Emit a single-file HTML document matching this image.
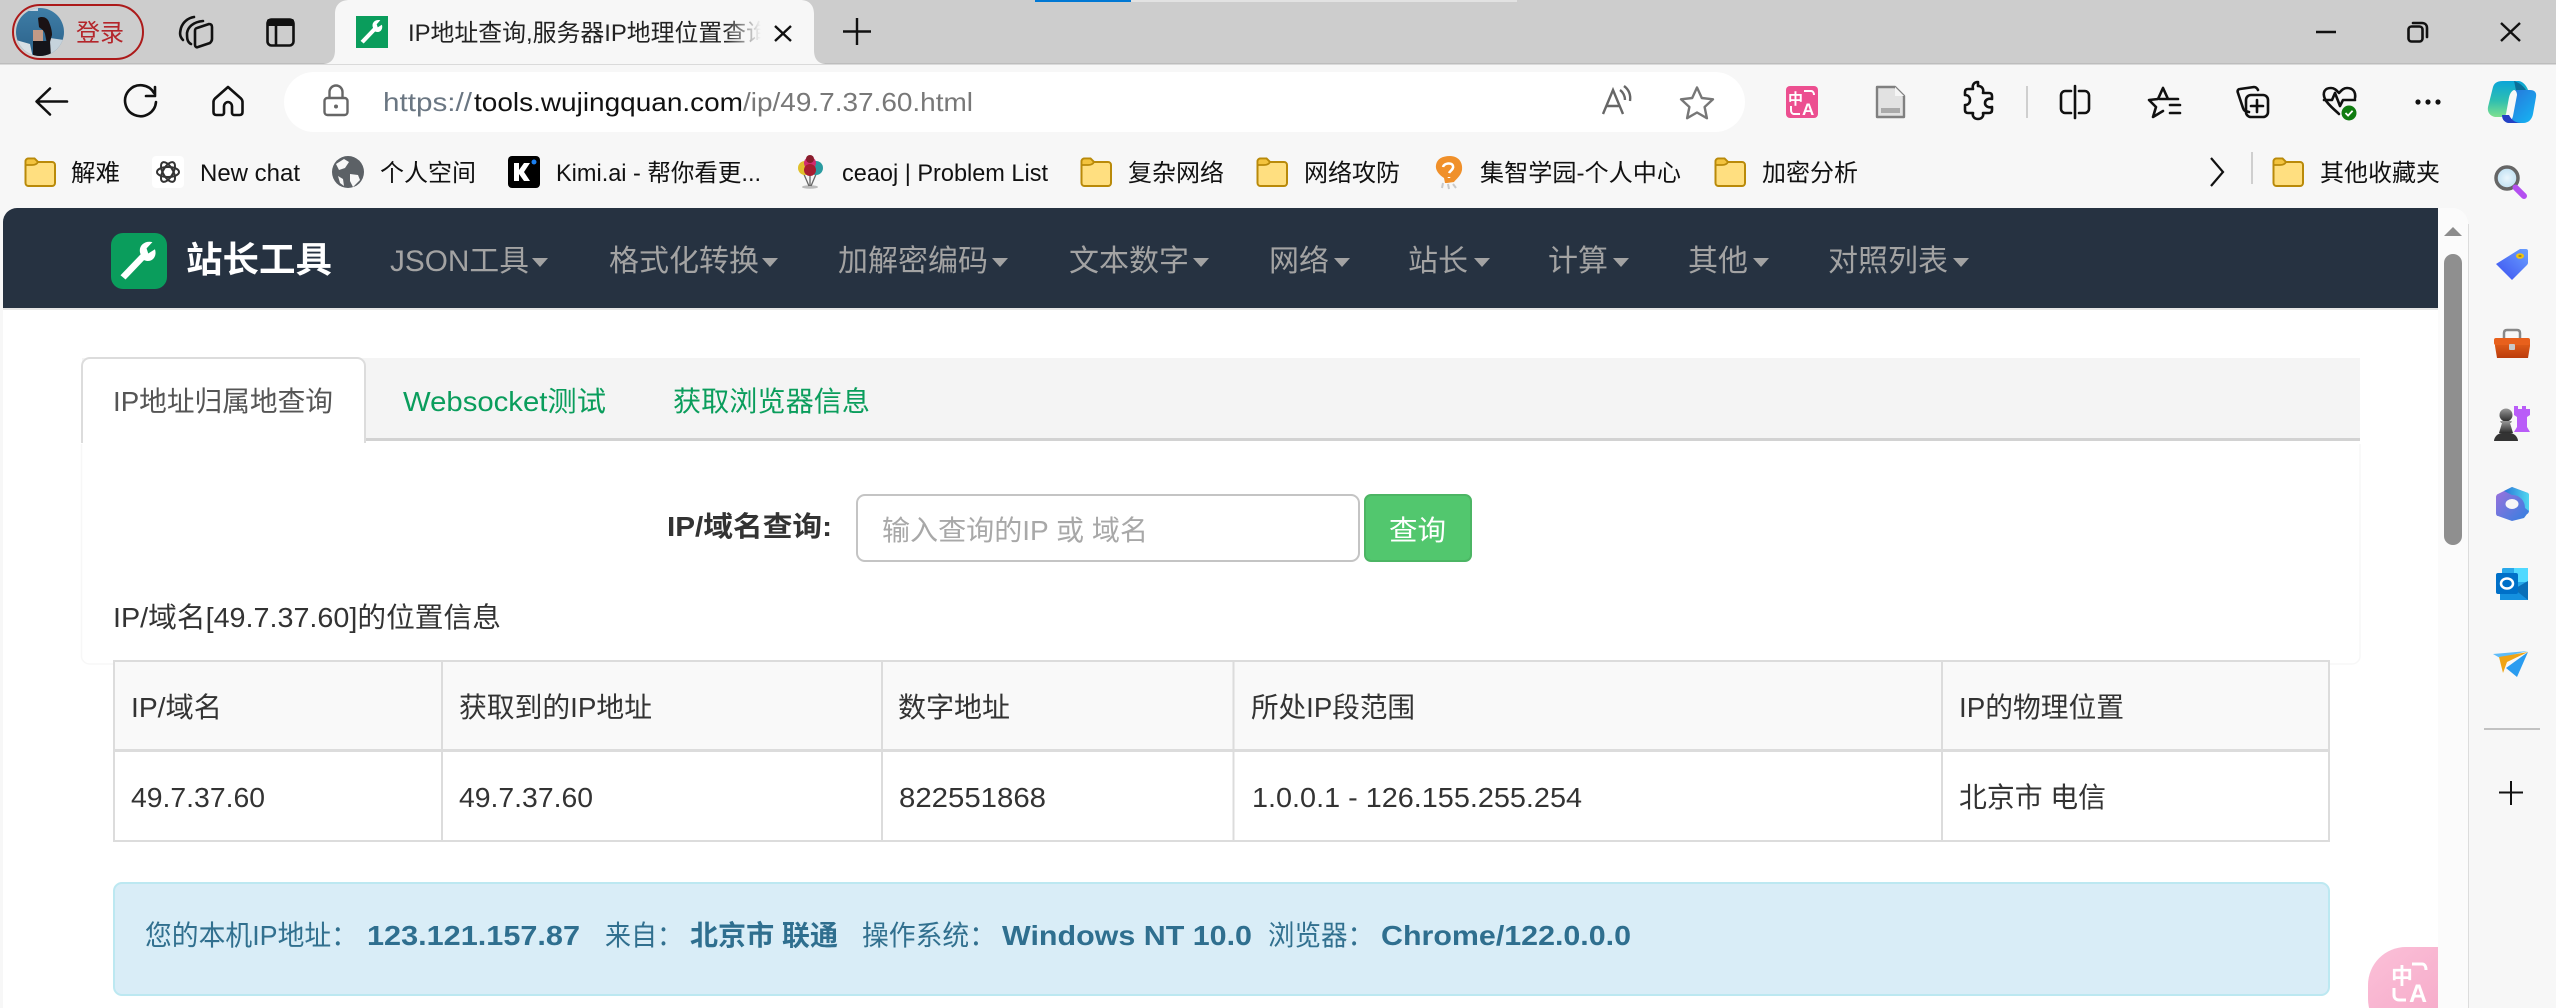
<!DOCTYPE html>
<html lang="zh"><head><meta charset="utf-8"><title>IP地址查询</title>
<style>
html,body{margin:0;padding:0;width:2556px;height:1008px;overflow:hidden;background:#f7f7f7}
svg{display:block}
text{font-family:"Liberation Sans","Noto Sans CJK SC",sans-serif}
.bm{font-size:24px;fill:#111}
.nav{font-size:30px;fill:#a3a3a3}
.b{font-size:28px;fill:#333}
.al{font-size:28px;fill:#31708f}
.alb{font-size:28px;fill:#2f6f8f;font-weight:700}
.ic{fill:none;stroke:#111;stroke-width:2.6;stroke-linecap:round;stroke-linejoin:round}
</style></head><body>
<svg xmlns="http://www.w3.org/2000/svg" width="2556" height="1008" viewBox="0 0 2556 1008">
<defs>
<symbol id="fold" viewBox="0 0 32 30"><path d="M1.5 6V26a3 3 0 0 0 3 3H28a3 3 0 0 0 3-3V8a3 3 0 0 0-3-3H14L10.500 1.500H4.500a3 3 0 0 0-3 3Z" fill="#ffdf80" stroke="#b98a0a" stroke-width="2"/><path d="M1.500 8H8C11 8 13 7 14 5L10.500 1.500H4.500a3 3 0 0 0-3 3Z" fill="#f3c33e" stroke="#b98a0a" stroke-width="1.800"/></symbol>
<symbol id="wr" viewBox="0 0 100 100"><path d="M18 94 L6 84 L54 34 C46 16 62 0 82 5 L68 20 L72 32 L88 22 C94 40 80 56 62 48 Z" fill="#fff"/></symbol>
<linearGradient id="pk" x1="0" y1="0" x2="1" y2="1"><stop offset="0" stop-color="#fbc0d8"/><stop offset="1" stop-color="#f4a3c4"/></linearGradient>
<linearGradient id="fadeT" x1="0" x2="1"><stop offset="0" stop-color="#f7f7f7" stop-opacity="0"/><stop offset="1" stop-color="#f7f7f7"/></linearGradient>
<linearGradient id="cp1" x1="0" y1="0" x2="0" y2="1"><stop offset="0" stop-color="#0aa5d8"/><stop offset=".55" stop-color="#2fbfb0"/><stop offset="1" stop-color="#7fe08f"/></linearGradient>
<linearGradient id="cp2" x1="0" y1="0" x2="1" y2="1"><stop offset="0" stop-color="#2a6fd8"/><stop offset="1" stop-color="#14b8f4"/></linearGradient>
<linearGradient id="tagg" x1="0" y1="1" x2="1" y2="0"><stop offset="0" stop-color="#3b4ff0"/><stop offset="1" stop-color="#6aa0ff"/></linearGradient>
<linearGradient id="boxg" x1="0" y1="0" x2="0" y2="1"><stop offset="0" stop-color="#e8641c"/><stop offset="1" stop-color="#bb3c0c"/></linearGradient>
<linearGradient id="pawn" x1="0" y1="0" x2="0" y2="1"><stop offset="0" stop-color="#999"/><stop offset="1" stop-color="#2c2c2c"/></linearGradient>
<linearGradient id="m1" x1="0" y1="0" x2="1" y2="1"><stop offset="0" stop-color="#a070dc"/><stop offset="1" stop-color="#3080e0"/></linearGradient>
<linearGradient id="m2" x1="0" y1="0" x2="1" y2="0"><stop offset="0" stop-color="#2a78d8"/><stop offset="1" stop-color="#50d8f0"/></linearGradient>
<linearGradient id="sk" x1="0" y1="0" x2="0" y2="1"><stop offset="0" stop-color="#3f7fa8"/><stop offset="1" stop-color="#2b6088"/></linearGradient>
<radialGradient id="lens"><stop offset="0" stop-color="#eaf6fd"/><stop offset="1" stop-color="#bfe0f2"/></radialGradient>
<clipPath id="cav"><circle cx="40" cy="32" r="24"/></clipPath>
<clipPath id="ctitle"><rect x="405" y="10" width="356" height="44"/></clipPath>
<clipPath id="cpage"><path d="M3 222a14 14 0 0 1 14-14H2452a16 16 0 0 1 16 16V1008H3Z"/></clipPath>
<clipPath id="cfloat"><rect x="2300" y="930" width="138" height="78"/></clipPath>
</defs>

<!-- window background -->
<rect width="2556" height="1008" fill="#f7f7f7"/>
<rect width="2556" height="63" fill="#cdcdcd"/>
<rect y="63" width="2556" height="1.500" fill="#bdbdbd"/>
<rect x="1035" y="0" width="96" height="2" fill="#0078d4"/><rect x="1131" y="0" width="386" height="2" fill="#e2e2e2"/>

<!-- profile -->
<rect x="13" y="5" width="130" height="54" rx="27" fill="none" stroke="#ac1a1a" stroke-width="2"/>
<g clip-path="url(#cav)"><rect x="14" y="6" width="52" height="52" fill="url(#sk)"/><rect x="26" y="8" width="12" height="3" fill="#c9d6e2"/><path d="M16 40l14 4 3 14H14Z" fill="#d8dfe4"/><path d="M50 38l14 2v18H50Z" fill="#c6d3dc"/><path d="M33 30h10v12H33Z" fill="#c29a86"/><path d="M38 18c4-2 9-1 11 4 2 5 3 9 3 13l-2 7-3 2-2-10c-1-4-4-5-6-7Z" fill="#1a1214"/><path d="M33 41h17l1 15H33Z" fill="#14141a"/></g>
<text x="76" y="41" font-size="24" fill="#b4252a" textLength="48" lengthAdjust="spacingAndGlyphs">登录</text>
<!-- collections / vertical tabs -->
<g class="ic" stroke-width="2.400"><path d="M183 40C179 36 180 32 181 28C183 22 188 18 194 17"/><path d="M191 44C187 42 187 38 187 33C188 27 193 22 203 21"/><path d="M195 31c0-2 1-3 2-3l12-4c2 0 3 1 3 3v12c0 2-1 3-2 4l-12 4c-2 1-3-1-3-2Z"/></g>
<rect x="267.500" y="19.500" width="26" height="26" rx="4" class="ic"/><rect x="267" y="19" width="27" height="7" rx="2" fill="#111"/><path d="M276 25V45" class="ic"/>

<!-- active tab -->
<path d="M322 64c9 0 13-5 13-14V14C335 5 340 0 350 0H800c9 0 14 5 14 14V50c0 9 4 14 13 14Z" fill="#f7f7f7"/>
<rect x="356" y="16" width="32" height="32" fill="#0a9d5c"/><use href="#wr" x="359" y="19" width="26" height="26"/>
<g clip-path="url(#ctitle)"><text x="408" y="41" font-size="24" fill="#222" textLength="362" lengthAdjust="spacingAndGlyphs">IP地址查询,服务器IP地理位置查询</text></g>
<rect x="725" y="14" width="36" height="38" fill="url(#fadeT)"/>
<path d="M775 26L791 41M791 26L775 41" stroke="#111" stroke-width="2.400" fill="none"/>
<path d="M857 18V45M843 31.500H871" stroke="#111" stroke-width="2.400" fill="none"/>

<!-- window controls -->
<path d="M2316 32H2336" stroke="#111" stroke-width="2.600"/>
<rect x="2408.500" y="26.500" width="14" height="15" rx="3" class="ic"/><path d="M2413 23h9c3 0 5 2 5 5v9" class="ic"/>
<path d="M2501 23L2520 41M2520 23L2501 41" stroke="#111" stroke-width="2.400"/>

<!-- toolbar icons -->
<path d="M67 101.500H37M50 88.500L36.500 101.500L50 114.500" class="ic"/>
<path d="M154 93a15.500 15.500 0 1 0 2 9" class="ic"/><path d="M155 87v9h-9" class="ic"/>
<path d="M228 87L215 98.500c-1 1-1.500 2-1.500 3.500V112c0 2 1 3 3 3H222c1 0 2-1 2-2V106c0-2 2-4 4-4s4 2 4 4v7c0 1 1 2 2 2h5.500c2 0 3-1 3-3V102c0-1.500-.5-2.500-1.500-3.500Z" class="ic"/>

<!-- address bar -->
<rect x="284" y="72" width="1461" height="60" rx="30" fill="#fff"/>
<rect x="324.500" y="98" width="23" height="17" rx="3" fill="none" stroke="#666" stroke-width="2.400"/><path d="M329.500 98V92a6.500 6.500 0 0 1 13 0v6" fill="none" stroke="#666" stroke-width="2.400"/><circle cx="336" cy="106.500" r="2" fill="#666"/>
<text x="383" y="111" font-size="26" fill="#6a7682" textLength="89" lengthAdjust="spacingAndGlyphs">https://</text>
<text x="474" y="111" font-size="26" fill="#111" textLength="269" lengthAdjust="spacingAndGlyphs">tools.wujingquan.com</text>
<text x="743" y="111" font-size="26" fill="#787878" textLength="230" lengthAdjust="spacingAndGlyphs">/ip/49.7.37.60.html</text>
<path d="M1603 114L1613 90L1623 114M1606.500 106H1620" fill="none" stroke="#666" stroke-width="2.400"/><path d="M1620 90c3 2 5 6 5 10M1624 86c4 3 7 8 6 15" fill="none" stroke="#666" stroke-width="2.400"/>
<path d="M1697 87.500l4.800 10.500 11.200 1.300-8.400 7.700 2.300 11.200-9.900-5.700-9.900 5.700 2.300-11.200-8.400-7.700 11.200-1.300Z" fill="none" stroke="#777" stroke-width="2.400" stroke-linejoin="round"/>

<!-- right toolbar -->
<rect x="1786" y="86" width="32" height="32" rx="4" fill="#ec4f90"/>
<text x="1788" y="104" font-size="15" font-weight="700" fill="#fff">中</text>
<text x="1802" y="115" font-size="17" font-weight="700" fill="#fff">A</text>
<path d="M1804 91h7c2 0 3 2 3 4M1791 106v4c0 2 1 4 3 4h6" fill="none" stroke="#fff" stroke-width="2"/>
<path d="M1877 87H1895L1904 96V117H1877Z" fill="#e2e2e2" stroke="#808080" stroke-width="2.400" stroke-linejoin="round"/><path d="M1895 87V96H1904" fill="#f5f5f5" stroke="none"/><rect x="1881" y="108" width="19" height="5" fill="#aaa"/>
<path d="M1978 87c4 0 6 3 5 7h6c2 0 3 1 3 3v3c-4-1-7 1-7 4s3 5 7 4v3c0 2-1 3-3 3h-6c1 4-2 6-5 6s-6-2-5-6h-5c-2 0-3-1-3-3v-5c3 0 5-2 5-5s-2-5-5-5v-3c0-2 1-3 3-3h5c-1-4 1-7 5-7Z" class="ic" transform="translate(0,-1)"/>
<rect x="2026" y="86" width="2" height="32" fill="#cfcfcf"/>
<path d="M2071 91H2065c-2 0-4 2-4 4V109c0 2 2 4 4 4H2071M2079 91H2085c2 0 4 2 4 4V109c0 2-2 4-4 4H2079" class="ic"/><path d="M2075 86V118" class="ic"/>
<path d="M2163 88L2168 99H2160M2168 99H2178M2163 88L2158 99L2149 100L2156 107L2153 117L2163 111" class="ic"/><path d="M2170 105H2180M2170 113H2180" class="ic" />
<path d="M2249 112c-4-1-5-1-6-4l-5-15c-1-2 0-4 2-4l14-2c2 0 3 1 4 3" class="ic"/><rect x="2246" y="95" width="22" height="22" rx="5" class="ic"/><path d="M2257 100V112M2251 106H2263" class="ic"/>
<path d="M2339 114c-5-5-11-9-14-15-3-7 0-11 6-11 4 0 6 3 8 5 2-2 4-5 8-5 6 0 9 4 8 10" class="ic"/><path d="M2324 100h8l3-7 5 13 3-6h12" class="ic" stroke-width="2"/>
<circle cx="2349" cy="113" r="7.500" fill="#107c10"/><path d="M2345.500 113l2.600 2.600 4.500-4.800" fill="none" stroke="#fff" stroke-width="1.800"/>
<circle cx="2418" cy="102" r="2.600" fill="#111"/><circle cx="2428" cy="102" r="2.600" fill="#111"/><circle cx="2438" cy="102" r="2.600" fill="#111"/>
<path d="M2504 81H2519c5 1 8 6 9 9l-14 0c-5 2-5 9-6 13l-2 11c-1 2-3 3-6 3h-5c-5-1-8-5-7-10l5-20c1-3 3-6 10-6Z" fill="url(#cp1)"/>
<path d="M2514 90H2530c4 0 7 2 6 7l-3 17c-1 5-4 9-10 9H2505c5 0 7-3 8-7l4-21c0-2-1-5-3-5Z" fill="url(#cp2)"/>
<path d="M2502 115c0 5 3 8 8 8h12c-6 0-10-2-13-8Z" fill="#2440c4"/><path d="M2514 81c3 1 8 3 12 9H2516c-1-3-1-6-2-9Z" fill="#0b6e98"/>

<!-- bookmarks -->
<use href="#fold" x="24" y="157" width="32" height="30"/>
<text x="71" y="181" class="bm" textLength="49" lengthAdjust="spacingAndGlyphs">解难</text>
<rect x="152" y="156" width="32" height="32" rx="4" fill="#fff"/>
<g fill="none" stroke="#333" stroke-width="2"><ellipse cx="168" cy="172" rx="11" ry="5" transform="rotate(60 168 172)"/><ellipse cx="168" cy="172" rx="11" ry="5" transform="rotate(-60 168 172)"/><ellipse cx="168" cy="172" rx="11" ry="5"/></g>
<text x="200" y="181" class="bm" textLength="100" lengthAdjust="spacingAndGlyphs">New chat</text>
<circle cx="348" cy="172" r="16" fill="#5c6166"/><path d="M336 164l8-5 5 3-4 6-6 2ZM350 174l8 1 2 5-7 7-3-6ZM338 176l5 3 1 7-4-3Z" fill="#f7f7f7"/>
<text x="380" y="181" class="bm" textLength="96" lengthAdjust="spacingAndGlyphs">个人空间</text>
<rect x="508" y="156" width="32" height="32" rx="4" fill="#000"/><path d="M514 163h5v7l5-7h6l-6 9 6 9h-6l-5-7v7h-5Z" fill="#fff"/><circle cx="534" cy="162" r="2.500" fill="#1b7ff0"/>
<text x="556" y="181" class="bm" textLength="205" lengthAdjust="spacingAndGlyphs">Kimi.ai - 帮你看更...</text>
<ellipse cx="810" cy="187" rx="8" ry="1.800" fill="#bbb"/><path d="M810 172V186M803 172L809 186M817 172L811 186" stroke="#666" stroke-width="1.300"/>
<circle cx="805" cy="168" r="7" fill="#e0c02c"/><circle cx="816" cy="168" r="7" fill="#2a9ba0"/><circle cx="810" cy="163" r="6" fill="#d02c70"/><circle cx="810" cy="159" r="4" fill="#8a1d2c"/><circle cx="810" cy="170" r="6" fill="#a81d30"/>
<text x="842" y="181" class="bm" textLength="206" lengthAdjust="spacingAndGlyphs">ceaoj | Problem List</text>
<use href="#fold" x="1080" y="157" width="32" height="30"/>
<text x="1128" y="181" class="bm" textLength="96" lengthAdjust="spacingAndGlyphs">复杂网络</text>
<use href="#fold" x="1256" y="157" width="32" height="30"/>
<text x="1304" y="181" class="bm" textLength="96" lengthAdjust="spacingAndGlyphs">网络攻防</text>
<path d="M1450 156c9 0 13 7 12 14-1 6-6 9-8 12l-7 1-2 0-1-5c-5-3-9-8-8-13 1-6 6-9 14-9Z" fill="#f0902a"/><path d="M1443 167c1-4 9-5 10-1 1 3-3 5-4 7M1449 177v1" fill="none" stroke="#fff" stroke-width="2.500"/><path d="M1443 183l-1 5M1448 184l1 5M1453 184l3 4" stroke="#c9c9c9" stroke-width="2"/>
<text x="1480" y="181" class="bm" textLength="201" lengthAdjust="spacingAndGlyphs">集智学园-个人中心</text>
<use href="#fold" x="1714" y="157" width="32" height="30"/>
<text x="1762" y="181" class="bm" textLength="96" lengthAdjust="spacingAndGlyphs">加密分析</text>
<path d="M2211 158L2223 172L2211 186" fill="none" stroke="#111" stroke-width="2.200"/>
<rect x="2251" y="152" width="2" height="32" fill="#cfcfcf"/>
<use href="#fold" x="2272" y="157" width="32" height="30"/>
<text x="2320" y="181" class="bm" textLength="120" lengthAdjust="spacingAndGlyphs">其他收藏夹</text>

<!-- page -->
<path d="M3 222a14 14 0 0 1 14-14H2452a16 16 0 0 1 16 16V1008H3Z" fill="#fff"/>
<path d="M2468 224V1008" stroke="#dcdcdc" stroke-width="2"/>
<g clip-path="url(#cpage)">
<rect x="2438" y="208" width="30" height="800" fill="#fbfbfb"/>
<rect x="3" y="208" width="2435" height="100" fill="#263241"/>
<rect x="3" y="308" width="2435" height="2" fill="#e6e6e6"/>
</g>
<path d="M2444 236L2453 227L2462 236Z" fill="#8c8c8c"/>
<rect x="2444" y="254" width="18" height="291" rx="9" fill="#8f8f8f"/>

<!-- navbar -->
<rect x="111" y="233" width="56" height="56" rx="12" fill="#0a9d5c"/><use href="#wr" x="118" y="240" width="42" height="42"/>
<text x="186" y="272" font-size="36" font-weight="700" fill="#fff" textLength="146" lengthAdjust="spacingAndGlyphs">站长工具</text>
<text x="390" y="271" class="nav" textLength="139" lengthAdjust="spacingAndGlyphs">JSON工具</text><path d="M532 258H548L540 267Z" fill="#a3a3a3"/>
<text x="609" y="271" class="nav" textLength="150" lengthAdjust="spacingAndGlyphs">格式化转换</text><path d="M762 258H778L770 267Z" fill="#a3a3a3"/>
<text x="838" y="271" class="nav" textLength="150" lengthAdjust="spacingAndGlyphs">加解密编码</text><path d="M992 258H1008L1000 267Z" fill="#a3a3a3"/>
<text x="1069" y="271" class="nav" textLength="120" lengthAdjust="spacingAndGlyphs">文本数字</text><path d="M1193 258H1209L1201 267Z" fill="#a3a3a3"/>
<text x="1269" y="271" class="nav" textLength="60" lengthAdjust="spacingAndGlyphs">网络</text><path d="M1334 258H1350L1342 267Z" fill="#a3a3a3"/>
<text x="1408" y="271" class="nav" textLength="60" lengthAdjust="spacingAndGlyphs">站长</text><path d="M1474 258H1490L1482 267Z" fill="#a3a3a3"/>
<text x="1548" y="271" class="nav" textLength="60" lengthAdjust="spacingAndGlyphs">计算</text><path d="M1613 258H1629L1621 267Z" fill="#a3a3a3"/>
<text x="1688" y="271" class="nav" textLength="60" lengthAdjust="spacingAndGlyphs">其他</text><path d="M1753 258H1769L1761 267Z" fill="#a3a3a3"/>
<text x="1828" y="271" class="nav" textLength="120" lengthAdjust="spacingAndGlyphs">对照列表</text><path d="M1953 258H1969L1961 267Z" fill="#a3a3a3"/>

<!-- tabs -->
<rect x="82" y="358" width="2278" height="80" fill="#f4f4f4"/>
<rect x="82" y="438" width="2278" height="3" fill="#d2d2d2"/>
<path d="M82 442V366a8 8 0 0 1 8-8H357a8 8 0 0 1 8 8V442Z" fill="#fff" stroke="#dcdcdc" stroke-width="2"/>
<rect x="83" y="436" width="281" height="8" fill="#fff"/>
<text x="113" y="411" font-size="28" fill="#555" textLength="220" lengthAdjust="spacingAndGlyphs">IP地址归属地查询</text>
<text x="403" y="411" font-size="28" fill="#0a9d5c" textLength="203" lengthAdjust="spacingAndGlyphs">Websocket测试</text>
<text x="673" y="411" font-size="28" fill="#0a9d5c" textLength="197" lengthAdjust="spacingAndGlyphs">获取浏览器信息</text>

<!-- panel -->
<path d="M81.500 444V656a8 8 0 0 0 8 8H2352a8 8 0 0 0 8-8V444" fill="none" stroke="#f7f7f7" stroke-width="1.500"/>
<text x="667" y="536" font-size="28" font-weight="700" fill="#333" textLength="165" lengthAdjust="spacingAndGlyphs">IP/域名查询:</text>
<rect x="857" y="495" width="502" height="66" rx="8" fill="#fff" stroke="#c4c4c4" stroke-width="2"/>
<text x="882" y="540" font-size="28" fill="#a8a8a8" textLength="266" lengthAdjust="spacingAndGlyphs">输入查询的IP 或 域名</text>
<rect x="1365" y="495" width="106" height="66" rx="6" fill="#52c76e" stroke="#4cb564" stroke-width="2"/>
<text x="1389" y="540" font-size="28" fill="#fff" textLength="57" lengthAdjust="spacingAndGlyphs">查询</text>
<text x="113" y="627" class="b" textLength="388" lengthAdjust="spacingAndGlyphs">IP/域名[49.7.37.60]的位置信息</text>

<!-- table -->
<rect x="114" y="661" width="2215" height="90" fill="#f9f9f9"/>
<rect x="114" y="661" width="2215" height="180" fill="none" stroke="#dcdcdc" stroke-width="2"/>
<rect x="113" y="749" width="2217" height="3" fill="#dcdcdc"/>
<path d="M442 661V841M882 661V841M1233.500 661V841M1942 661V841" stroke="#dcdcdc" stroke-width="2"/>
<text x="131" y="717" class="b" textLength="91" lengthAdjust="spacingAndGlyphs">IP/域名</text>
<text x="459" y="717" class="b" textLength="193" lengthAdjust="spacingAndGlyphs">获取到的IP地址</text>
<text x="898" y="717" class="b" textLength="112" lengthAdjust="spacingAndGlyphs">数字地址</text>
<text x="1251" y="717" class="b" textLength="164" lengthAdjust="spacingAndGlyphs">所处IP段范围</text>
<text x="1959" y="717" class="b" textLength="165" lengthAdjust="spacingAndGlyphs">IP的物理位置</text>
<text x="131" y="807" class="b" textLength="134" lengthAdjust="spacingAndGlyphs">49.7.37.60</text>
<text x="459" y="807" class="b" textLength="134" lengthAdjust="spacingAndGlyphs">49.7.37.60</text>
<text x="899" y="807" class="b" textLength="147" lengthAdjust="spacingAndGlyphs">822551868</text>
<text x="1252" y="807" class="b" textLength="330" lengthAdjust="spacingAndGlyphs">1.0.0.1 - 126.155.255.254</text>
<text x="1959" y="807" class="b" textLength="147" lengthAdjust="spacingAndGlyphs">北京市 电信</text>

<!-- alert -->
<rect x="114" y="883" width="2215" height="112" rx="8" fill="#d9edf7" stroke="#bce8f1" stroke-width="2"/>
<text x="145" y="945" class="al" textLength="213" lengthAdjust="spacingAndGlyphs">您的本机IP地址：</text>
<text x="367" y="945" class="alb" textLength="213" lengthAdjust="spacingAndGlyphs">123.121.157.87</text>
<text x="605" y="945" class="al" textLength="78" lengthAdjust="spacingAndGlyphs">来自：</text>
<text x="690" y="945" class="alb" textLength="148" lengthAdjust="spacingAndGlyphs">北京市 联通</text>
<text x="862" y="945" class="al" textLength="134" lengthAdjust="spacingAndGlyphs">操作系统：</text>
<text x="1002" y="945" class="alb" textLength="250" lengthAdjust="spacingAndGlyphs">Windows NT 10.0</text>
<text x="1268" y="945" class="al" textLength="106" lengthAdjust="spacingAndGlyphs">浏览器：</text>
<text x="1381" y="945" class="alb" textLength="250" lengthAdjust="spacingAndGlyphs">Chrome/122.0.0.0</text>

<!-- floating translate -->
<g clip-path="url(#cfloat)"><rect x="2368" y="947" width="110" height="90" rx="38" fill="url(#pk)"/>
<text x="2391" y="984" font-size="22" font-weight="700" fill="#fff">中</text><text x="2409" y="1002" font-size="25" font-weight="700" fill="#fff">A</text>
<path d="M2412 964h10c3 0 4 3 4 6M2394 988v7c0 3 2 5 5 5h7" fill="none" stroke="#fff" stroke-width="3"/></g>

<!-- sidebar -->
<circle cx="2507" cy="178" r="11" fill="url(#lens)" stroke="#666" stroke-width="3.500"/><path d="M2515.500 187.500L2524 196" stroke="#b44ff0" stroke-width="6" stroke-linecap="round"/>
<path d="M2496 264L2520 249H2526a2 2 0 0 1 2 2V263a3 3 0 0 1-1 2L2512 280Z" fill="url(#tagg)"/><ellipse cx="2520" cy="256" rx="4" ry="2.800" fill="#f2c40c"/><ellipse cx="2520" cy="256" rx="1.600" ry="1.100" fill="#a38820"/>
<path d="M2504 338v-5c0-2 1-3 3-3h10c2 0 3 1 3 3v5" fill="none" stroke="#888" stroke-width="2.500"/><path d="M2495 340H2530V346L2528 358H2497L2495 346Z" fill="url(#boxg)"/><rect x="2494" y="338" width="36" height="7" rx="2" fill="#e8601c"/><rect x="2509" y="344" width="6" height="6" rx="1" fill="#c8c8c8"/>
<circle cx="2506" cy="415" r="6.500" fill="url(#pawn)"/><path d="M2500 421H2512L2511 423H2510L2513 433H2499L2502 423H2501Z" fill="url(#pawn)"/><path d="M2494 441c0-4 4-8 8-8H2510c4 0 8 4 8 8Z" fill="#333"/>
<path d="M2514 406H2518V409H2522V406H2526V409H2530V406H2530V415L2527 417V427L2530 432H2514L2517 427V417L2514 415Z" fill="#b95cf8"/>
<path d="M2512 487L2528 493C2529 494 2529 495 2529 497V511C2529 512 2528 514 2527 514L2524 518 2512 521 2498 516C2497 516 2496 515 2496 513V497C2496 496 2497 494 2498 494Z" fill="url(#m1)"/>
<path d="M2504 491L2512 487L2528 493C2529 494 2529 495 2529 497V511L2525 508C2525 500 2519 495 2512 495Z" fill="url(#m2)"/><ellipse cx="2512" cy="504" rx="6.500" ry="5" fill="#f7f7f7"/>
<rect x="2502" y="568" width="26" height="31" rx="1.500" fill="#28a8ea"/><rect x="2514" y="568" width="14" height="14" fill="#50d9ff"/><path d="M2500 588H2528V600H2500Z" fill="#1490df"/><path d="M2514 589L2528 581V600Z" fill="#0a6fb8"/><rect x="2496" y="573" width="22" height="21" rx="2" fill="#0070c8"/><ellipse cx="2507" cy="583.500" rx="6" ry="5" fill="none" stroke="#fff" stroke-width="2.500"/>
<path d="M2528 652L2517 677L2506 668Z" fill="#2a9cf0"/><path d="M2493 654L2528 651L2500 658Z" fill="#5fbcf8"/><path d="M2499 657L2528 652L2507 662L2503 673Z" fill="#f0a414"/>
<rect x="2484" y="728" width="56" height="2" fill="#c2c2c2"/>
<path d="M2511 781V805M2499 792.500H2523" stroke="#111" stroke-width="2"/>
</svg>
</body></html>
